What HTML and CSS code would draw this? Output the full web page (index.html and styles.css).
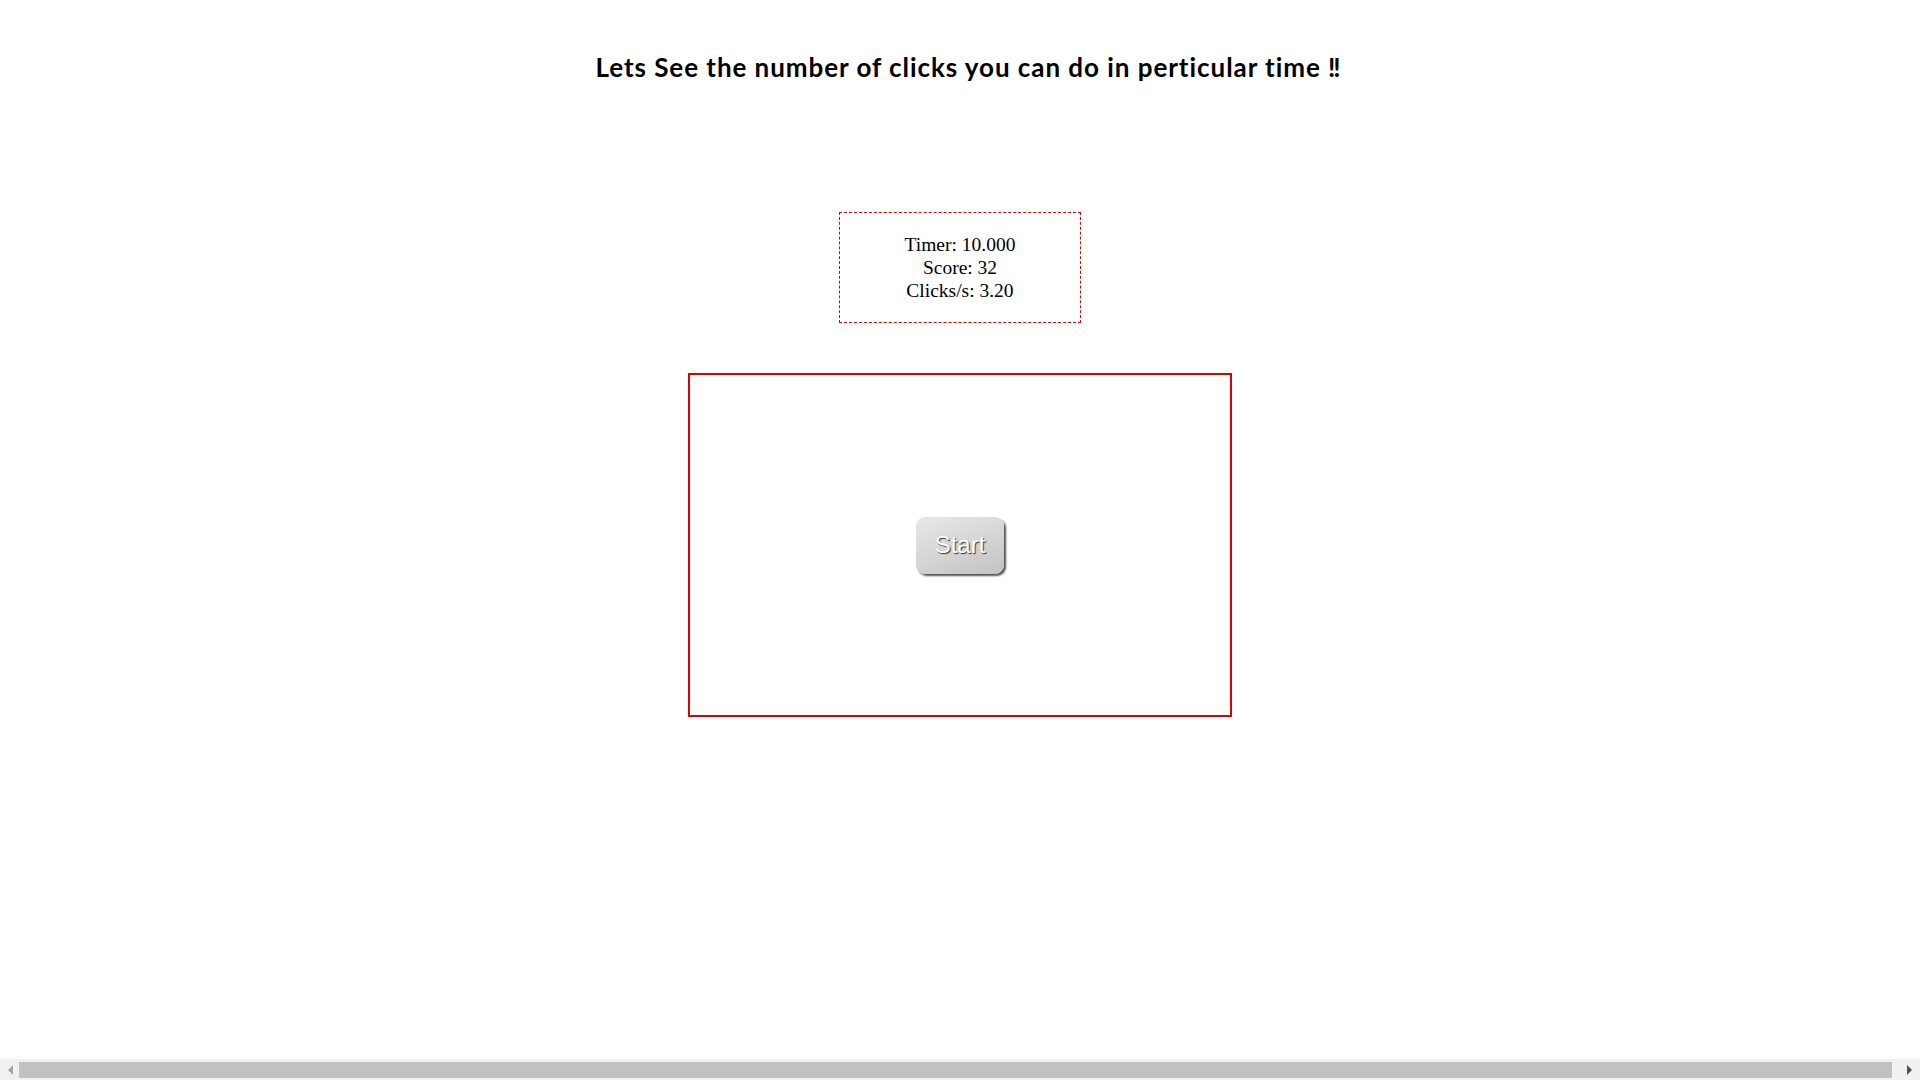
FILE: index.html
```html
<!DOCTYPE html>
<html lang="en">
<head>
<meta charset="utf-8">
<title>Click Speed</title>
<link rel="stylesheet" href="styles.css">
</head>
<body>
  <h2 class="title">Lets See the number of clicks you can do in perticular time &#x203C;</h2>
  <div class="stats">
    <div class="stat">Timer: 10.000</div>
    <div class="stat">Score: 32</div>
    <div class="stat">Clicks/s: 3.20</div>
  </div>
  <div class="arena">
    <button class="start-btn" type="button">Start</button>
  </div>
  <div class="hscroll" aria-hidden="true">
    <span class="arrow arrow-left"></span>
    <span class="thumb"></span>
    <span class="arrow arrow-right"></span>
  </div>
</body>
</html>
```

FILE: styles.css
```css
html, body {
  margin: 0;
  padding: 0;
  background: #ffffff;
  overflow: hidden;
}

body {
  width: 1920px;
  height: 1080px;
  display: flex;
  flex-direction: column;
  align-items: center;
  font-family: "Liberation Serif", "Times New Roman", serif;
}

.title {
  margin: 51px 0 0 0;
  padding-left: 17px;
  font-family: Lato, "Open Sans", sans-serif;
  font-weight: 700;
  font-size: 26px;
  line-height: 32px;
  letter-spacing: 0.95px;
  color: #000000;
  text-align: center;
}

.stats {
  margin-top: 129px;
  width: 240px;
  padding: 20px 0;
  border: 1px dashed #e00000;
  text-align: center;
  font-size: 19.5px;
  line-height: 23px;
  color: #000000;
}

.arena {
  margin-top: 50px;
  width: 540px;
  height: 340px;
  border: 2px solid #e00000;
  display: flex;
  align-items: center;
  justify-content: center;
}

.start-btn {
  width: 88px;
  height: 57px;
  padding: 0;
  border: none;
  border-radius: 9px;
  background: linear-gradient(160deg, #e8e8e8 0%, #d6d6d6 50%, #c2c2c2 100%);
  box-shadow: 2px 2px 2px #555555;
  color: #ffffff;
  font-family: "Liberation Sans", Arial, sans-serif;
  font-size: 24px;
  text-shadow: 1px 1px 1px #333333;
  cursor: pointer;
}

.hscroll {
  position: fixed;
  left: 0;
  right: 0;
  bottom: 0;
  height: 21px;
  background: #f1f1f1;
  display: flex;
  align-items: center;
}

.arrow {
  width: 0;
  height: 0;
  border-top: 5px solid transparent;
  border-bottom: 5px solid transparent;
}

.arrow-left {
  margin: 0 6px 0 8px;
  border-right: 5px solid #a3a3a3;
}

.arrow-right {
  margin: 0 8px 0 15px;
  border-left: 5px solid #505050;
}

.thumb {
  flex: 1;
  height: 16px;
  background: #c1c1c1;
}
```
